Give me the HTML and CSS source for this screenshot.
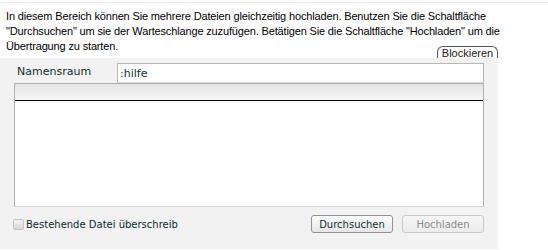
FILE: index.html
```html
<!DOCTYPE html>
<html lang="de">

<head>
    <meta charset="UTF-8">
    <title>Hochladen</title>
    <link rel="stylesheet" href="styles.css">
</head>

<body>
    <div class="topline"></div>

    <!-- Einleitung -->
    <p class="intro">In diesem Bereich können Sie mehrere Dateien gleichzeitig hochladen. Benutzen Sie die Schaltfläche "Durchsuchen" um sie der Warteschlange zuzufügen. Betätigen Sie die Schaltfläche "Hochladen" um die Übertragung zu starten.</p>

    <div class="uploader">
        <div class="tab-row">
            <span class="tab">Blockieren</span>
        </div>

        <div class="panel">
            <div class="ns-row">
                <label class="ns-label" for="ns">Namensraum</label>
                <input class="ns-input" type="text" id="ns" value=":hilfe">
            </div>

            <!-- Warteschlange -->
            <div class="queue">
                <div class="queue-head"></div>
                <div class="queue-body"></div>
            </div>

            <div class="actions">
                <label class="overwrite">
                    <span class="check"></span>
                    Bestehende Datei überschreib
                </label>
                <div class="buttons">
                    <button class="btn">Durchsuchen</button>
                    <button class="btn btn-disabled" disabled>Hochladen</button>
                </div>
            </div>
        </div>
    </div>
</body>

</html>
```

FILE: styles.css
```css
/* Basic reset */
* {
    margin: 0;
    padding: 0;
    box-sizing: border-box;
}

body {
    font-family: 'Liberation Sans', Arial, sans-serif;
    font-size: 11px;
    color: #000;
    background: #fff;
    width: 548px;
    height: 250px;
    overflow: hidden;
}

.topline {
    margin-top: 2px;
    border-top: 1px solid #ebebeb;
}

/* Intro text */
.intro {
    width: 520px;
    padding: 6px 0 0 6px;
    line-height: 15px;
    letter-spacing: -0.15px;
}

/* Uploader */
.uploader {
    width: 498px;
}

.tab-row {
    display: flex;
    justify-content: flex-end;
    margin-top: -8px;
}

.tab {
    height: 12px;
    width: 61px;
    border: 1px solid #555;
    border-bottom: none;
    border-radius: 6px 6px 0 0;
    background: #fff;
    font-size: 11px;
    line-height: 12px;
    text-align: center;
    color: #222;
}

.panel {
    background: #f2f2f2;
    height: 191px;
    padding: 5px 14px 0 14px;
    font-family: 'DejaVu Sans', Verdana, sans-serif;
    font-size: 11px;
    color: #10302e;
}

/* Namensraum row */
.ns-row {
    display: flex;
    height: 20px;
}

.ns-label {
    width: 103px;
    padding-left: 3px;
    line-height: 18px;
}

.ns-input {
    width: 367px;
    height: 20px;
    border: 1px solid #b4b8b6;
    border-bottom-color: #d8d8d8;
    padding: 0 2px;
    font-family: 'DejaVu Sans', Verdana, sans-serif;
    font-size: 11px;
    color: #10302e;
    background: #fff;
}

/* Queue list */
.queue {
    width: 470px;
    height: 124px;
    border: 1px solid #aab2ae;
    border-bottom-color: #d8d8d8;
    background: #fff;
}

.queue-head {
    height: 17px;
    background: linear-gradient(#e4e4e4, #f6f6f6);
    border-bottom: 1px solid #000;
}

/* Bottom row */
.actions {
    display: flex;
    align-items: center;
    justify-content: space-between;
    width: 470px;
    margin-top: 8px;
}

.overwrite {
    display: flex;
    align-items: center;
    margin-left: -1px;
    font-size: 10px;
    color: #0c2a2c;
}

.check {
    width: 11px;
    height: 11px;
    margin-right: 2px;
    border: 1px solid #c4c4c4;
    border-radius: 2px;
    background: linear-gradient(#f4f4f4, #d4d4d4);
}

.buttons {
    display: flex;
    gap: 9px;
}

.btn {
    width: 82px;
    height: 18px;
    border: 1px solid #8e9290;
    border-radius: 3px;
    background: linear-gradient(#fdfdfd, #e6e6e6);
    font-family: 'DejaVu Sans', Verdana, sans-serif;
    font-size: 10px;
    color: #10302e;
}

.btn-disabled {
    border-color: #c8c8c8;
    color: #8a8a8a;
    background: linear-gradient(#f6f6f6, #ececec);
}
```
